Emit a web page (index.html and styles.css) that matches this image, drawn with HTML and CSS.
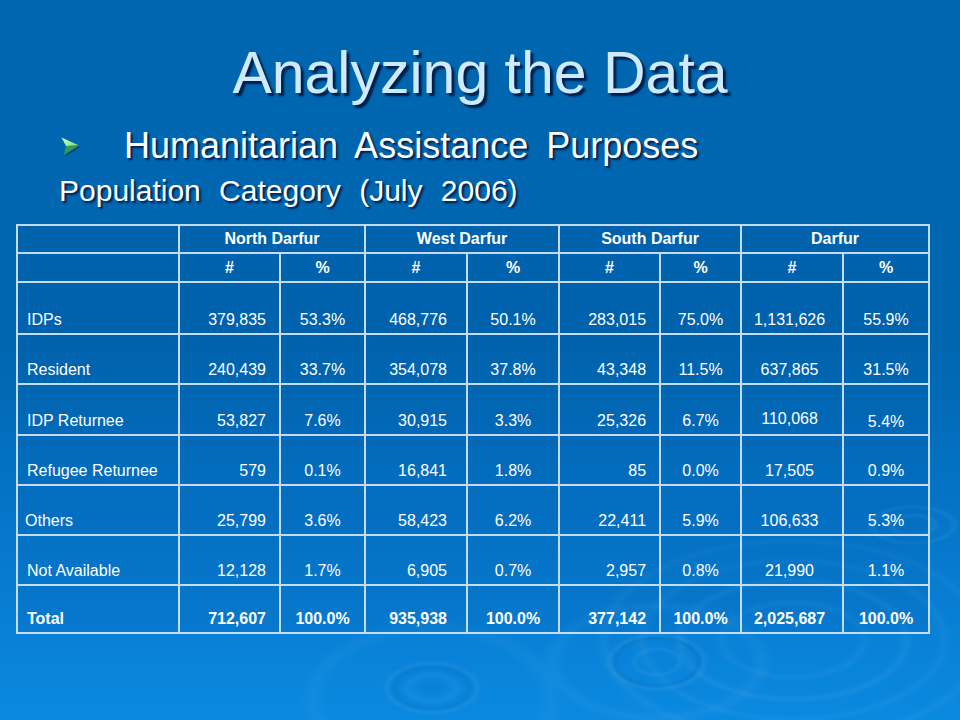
FILE: index.html
```html
<!DOCTYPE html>
<html>
<head>
<meta charset="utf-8">
<link rel="stylesheet" href="styles.css">
</head>
<body>
<div class="slide">
  <h1 class="title">Analyzing the Data</h1>
  <div class="bullet">
    <svg class="arrow" viewBox="0 0 20 20" width="20" height="20">
      <defs>
        <linearGradient id="ag" x1="0" y1="0" x2="1" y2="1">
          <stop offset="0" stop-color="#d2ffb8"/>
          <stop offset="1" stop-color="#7fdc8a"/>
        </linearGradient>
      </defs>
      <polygon points="2,2 19.5,10 4.5,19.5 6.5,10.5" fill="#0b2d55" opacity="0.55"/>
      <polygon points="0.5,0.5 18,8.5 5,9" fill="url(#ag)"/>
      <polygon points="5,9 18,8.5 3,18" fill="#2f9d5a"/>
    </svg>
    <span class="bullet-text">Humanitarian Assistance Purposes</span>
  </div>
  <div class="subtitle">Population Category (July 2006)</div>
  <table class="data-table">
    <colgroup>
      <col class="c-label"><col class="c-n1"><col class="c-p1"><col class="c-n2"><col class="c-p2"><col class="c-n3"><col class="c-p3"><col class="c-n4"><col class="c-p4">
    </colgroup>
    <tr class="h1">
      <th></th>
      <th colspan="2">North Darfur</th>
      <th colspan="2">West Darfur</th>
      <th colspan="2">South Darfur</th>
      <th colspan="2">Darfur</th>
    </tr>
    <tr class="h2">
      <th></th><th>#</th><th>%</th><th>#</th><th>%</th><th>#</th><th>%</th><th>#</th><th>%</th>
    </tr>
    <tr class="row first">
      <td class="lbl">IDPs</td><td class="num">379,835</td><td class="pct">53.3%</td><td class="numw">468,776</td><td class="pct">50.1%</td><td class="num">283,015</td><td class="pct">75.0%</td><td class="ctr">1,131,626</td><td class="pct">55.9%</td>
    </tr>
    <tr class="row">
      <td class="lbl">Resident</td><td class="num">240,439</td><td class="pct">33.7%</td><td class="numw">354,078</td><td class="pct">37.8%</td><td class="num">43,348</td><td class="pct">11.5%</td><td class="ctr">637,865</td><td class="pct">31.5%</td>
    </tr>
    <tr class="row short">
      <td class="lbl">IDP Returnee</td><td class="num">53,827</td><td class="pct">7.6%</td><td class="numw">30,915</td><td class="pct">3.3%</td><td class="num">25,326</td><td class="pct">6.7%</td><td class="ctr up">110,068</td><td class="pct down">5.4%</td>
    </tr>
    <tr class="row">
      <td class="lbl">Refugee Returnee</td><td class="num">579</td><td class="pct">0.1%</td><td class="numw">16,841</td><td class="pct">1.8%</td><td class="num">85</td><td class="pct">0.0%</td><td class="ctr">17,505</td><td class="pct">0.9%</td>
    </tr>
    <tr class="row">
      <td class="lbl lbl-tight">Others</td><td class="num">25,799</td><td class="pct">3.6%</td><td class="numw">58,423</td><td class="pct">6.2%</td><td class="num">22,411</td><td class="pct">5.9%</td><td class="ctr">106,633</td><td class="pct">5.3%</td>
    </tr>
    <tr class="row">
      <td class="lbl">Not Available</td><td class="num">12,128</td><td class="pct">1.7%</td><td class="numw">6,905</td><td class="pct">0.7%</td><td class="num">2,957</td><td class="pct">0.8%</td><td class="ctr">21,990</td><td class="pct">1.1%</td>
    </tr>
    <tr class="row short total">
      <td class="lbl">Total</td><td class="num">712,607</td><td class="pct">100.0%</td><td class="numw">935,938</td><td class="pct">100.0%</td><td class="num">377,142</td><td class="pct">100.0%</td><td class="ctr">2,025,687</td><td class="pct">100.0%</td>
    </tr>
  </table>
</div>
</body>
</html>
```

FILE: styles.css
```css
html, body {
  margin: 0;
  padding: 0;
}

.slide {
  width: 960px;
  height: 720px;
  overflow: hidden;
  display: flex;
  flex-direction: column;
  font-family: "Liberation Sans", Arial, sans-serif;
  color: #ffffff;
  background-color: #0066b0;
  background-image:
    radial-gradient(ellipse 60px 34px at 657px 662px, transparent 30%, rgba(255,255,255,0.05) 38%, transparent 46%, transparent 62%, rgba(0,40,100,0.08) 70%, rgba(255,255,255,0.05) 78%, transparent 88%),
    radial-gradient(ellipse 130px 70px at 657px 662px, transparent 70%, rgba(255,255,255,0.04) 80%, transparent 90%),
    radial-gradient(ellipse 210px 110px at 793px 640px, transparent 30%, rgba(255,255,255,0.04) 34%, transparent 38%, transparent 50%, rgba(255,255,255,0.05) 54%, transparent 58%, transparent 68%, rgba(255,255,255,0.04) 72%, transparent 76%, transparent 86%, rgba(255,255,255,0.04) 90%, transparent 95%),
    radial-gradient(ellipse 55px 30px at 432px 688px, rgba(0,40,100,0.08) 0%, transparent 30%, rgba(255,255,255,0.04) 45%, transparent 55%, rgba(0,40,100,0.08) 70%, rgba(255,255,255,0.05) 82%, transparent 92%),
    radial-gradient(ellipse 140px 85px at 432px 700px, transparent 75%, rgba(255,255,255,0.035) 85%, transparent 95%),
    radial-gradient(ellipse 50px 22px at 913px 525px, transparent 30%, rgba(255,255,255,0.06) 45%, transparent 55%, transparent 70%, rgba(255,255,255,0.05) 82%, transparent 95%),
    linear-gradient(180deg, #0066b0 0%, #0066b0 48%, #0575c9 72%, #0a89e0 100%);
}

.title {
  margin: 0;
  padding-top: 44px;
  text-align: center;
  font-size: 59px;
  line-height: 58px;
  font-weight: normal;
  color: #cfeafc;
  text-shadow: 3px 3px 2px rgba(0, 18, 55, 0.85);
}

.bullet {
  margin-top: 24px;
  padding-left: 61px;
  display: flex;
  align-items: center;
  height: 40px;
}

.arrow {
  flex: none;
  margin-top: 2px;
}

.bullet-text {
  margin-left: 43px;
  font-size: 36px;
  line-height: 40px;
  word-spacing: 8px;
  text-shadow: 2px 2px 2px rgba(0, 18, 55, 0.85);
}

.subtitle {
  margin-top: 8px;
  padding-left: 59px;
  font-size: 30px;
  line-height: 34px;
  word-spacing: 10px;
  text-shadow: 2px 2px 2px rgba(0, 18, 55, 0.85);
}

.data-table {
  margin-top: 16px;
  margin-left: 16px;
  width: 912px;
  table-layout: fixed;
  border-collapse: collapse;
  border: 2px solid #8fc9f2;
  background: rgba(0, 70, 150, 0.12);
  font-size: 16px;
  color: #ffffff;
}

.c-label { width: 162px; }
.c-n1 { width: 101px; }
.c-p1 { width: 85px; }
.c-n2 { width: 102px; }
.c-p2 { width: 92px; }
.c-n3 { width: 101px; }
.c-p3 { width: 81px; }
.c-n4 { width: 102px; }
.c-p4 { width: 86px; }

.data-table th,
.data-table td {
  border: 2px solid #c4dcf0;
  padding: 0;
  line-height: 18px;
  overflow: hidden;
  white-space: nowrap;
}

.data-table th {
  font-weight: bold;
  text-align: center;
  vertical-align: middle;
}

.h1 th { height: 26px; }
.h2 th { height: 27px; }

.row td {
  height: 44px;
  vertical-align: bottom;
  padding-bottom: 4px;
}

.row.first td { height: 46px; }
.row.short td { height: 43px; }
.row.total td { height: 42px; }

.total td { font-weight: bold; }

.lbl {
  text-align: left;
  padding-left: 9px !important;
}

.lbl-tight { padding-left: 7px !important; }

.num {
  text-align: right;
  padding-right: 13px !important;
}

.numw {
  text-align: right;
  padding-right: 19px !important;
}

.ctr {
  text-align: center;
  padding-right: 5px !important;
}

.pct {
  text-align: center;
}

.up { padding-bottom: 6px !important; }
.down { padding-bottom: 3px !important; }
```
